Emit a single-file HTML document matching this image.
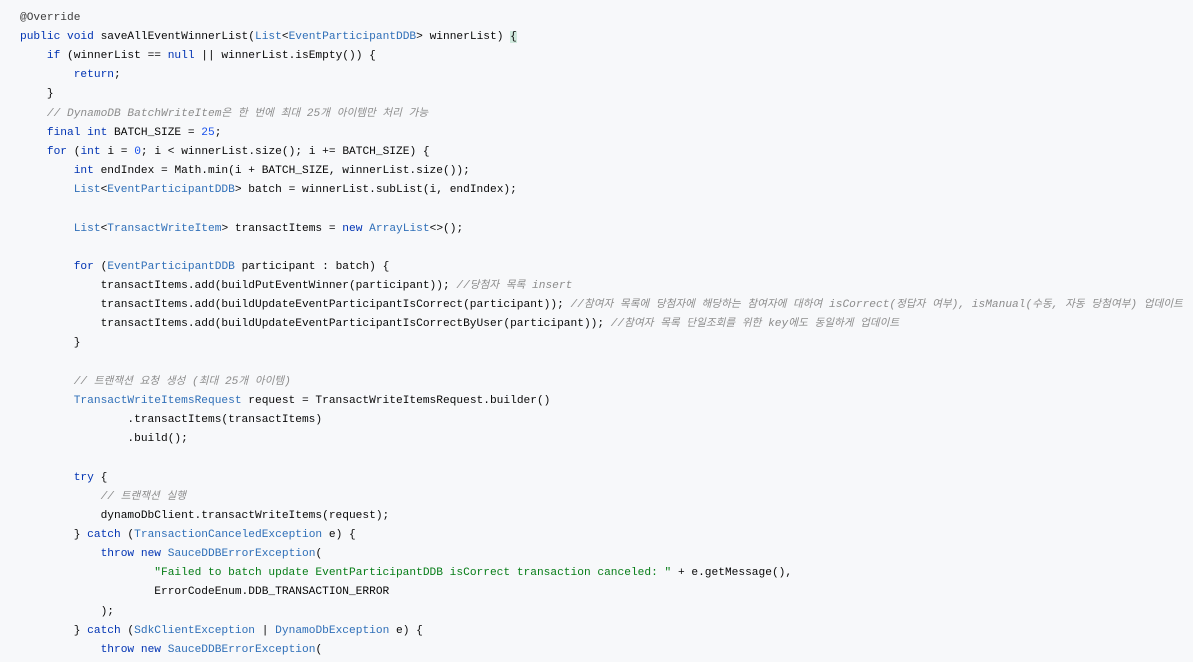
<!DOCTYPE html>
<html><head><meta charset="utf-8"><style>
body{margin:0;background:#f7f8fa;width:1193px;height:662px;overflow:hidden}
pre{margin:0;position:absolute;left:20px;top:8.8px;font-family:"Liberation Mono","Noto Sans CJK KR",monospace;font-size:11.2px;line-height:19.15px;color:#080808}
.k{color:#0033b3}.t{color:#2f6fb8}.c{color:#8c8c8c;font-style:italic}.s{color:#067d17}.n{color:#1750eb}.a{color:#3d3d3d}
.h{background:#cfe8dc}
.o{font-size:10.6px}
</style></head><body>
<pre><span class="a">@Override</span>
<span class="k">public void</span> saveAllEventWinnerList(<span class="t">List</span>&lt;<span class="t">EventParticipantDDB</span>&gt; winnerList) <span class="h">{</span>
    <span class="k">if</span> (winnerList == <span class="k">null</span> || winnerList.isEmpty()) {
        <span class="k">return</span>;
    }
    <span class="c">// DynamoDB BatchWriteItem<span class="o">은</span> <span class="o">한</span> <span class="o">번에</span> <span class="o">최대</span> 25<span class="o">개</span> <span class="o">아이템만</span> <span class="o">처리</span> <span class="o">가능</span></span>
    <span class="k">final int</span> BATCH_SIZE = <span class="n">25</span>;
    <span class="k">for</span> (<span class="k">int</span> i = <span class="n">0</span>; i &lt; winnerList.size(); i += BATCH_SIZE) {
        <span class="k">int</span> endIndex = Math.min(i + BATCH_SIZE, winnerList.size());
        <span class="t">List</span>&lt;<span class="t">EventParticipantDDB</span>&gt; batch = winnerList.subList(i, endIndex);

        <span class="t">List</span>&lt;<span class="t">TransactWriteItem</span>&gt; transactItems = <span class="k">new</span> <span class="t">ArrayList</span>&lt;&gt;();

        <span class="k">for</span> (<span class="t">EventParticipantDDB</span> participant : batch) {
            transactItems.add(buildPutEventWinner(participant)); <span class="c">//<span class="o">당첨자</span> <span class="o">목록</span> insert</span>
            transactItems.add(buildUpdateEventParticipantIsCorrect(participant)); <span class="c">//<span class="o">참여자</span> <span class="o">목록에</span> <span class="o">당첨자에</span> <span class="o">해당하는</span> <span class="o">참여자에</span> <span class="o">대하여</span> isCorrect(<span class="o">정답자</span> <span class="o">여부</span>), isManual(<span class="o">수동</span>, <span class="o">자동</span> <span class="o">당첨여부</span>) <span class="o">업데이트</span></span>
            transactItems.add(buildUpdateEventParticipantIsCorrectByUser(participant)); <span class="c">//<span class="o">참여자</span> <span class="o">목록</span> <span class="o">단일조회를</span> <span class="o">위한</span> key<span class="o">에도</span> <span class="o">동일하게</span> <span class="o">업데이트</span></span>
        }

        <span class="c">// <span class="o">트랜잭션</span> <span class="o">요청</span> <span class="o">생성</span> (<span class="o">최대</span> 25<span class="o">개</span> <span class="o">아이템</span>)</span>
        <span class="t">TransactWriteItemsRequest</span> request = TransactWriteItemsRequest.builder()
                .transactItems(transactItems)
                .build();

        <span class="k">try</span> {
            <span class="c">// <span class="o">트랜잭션</span> <span class="o">실행</span></span>
            dynamoDbClient.transactWriteItems(request);
        } <span class="k">catch</span> (<span class="t">TransactionCanceledException</span> e) {
            <span class="k">throw new</span> <span class="t">SauceDDBErrorException</span>(
                    <span class="s">"Failed to batch update EventParticipantDDB isCorrect transaction canceled: "</span> + e.getMessage(),
                    ErrorCodeEnum.DDB_TRANSACTION_ERROR
            );
        } <span class="k">catch</span> (<span class="t">SdkClientException</span> | <span class="t">DynamoDbException</span> e) {
            <span class="k">throw new</span> <span class="t">SauceDDBErrorException</span>(
</pre>
</body></html>
